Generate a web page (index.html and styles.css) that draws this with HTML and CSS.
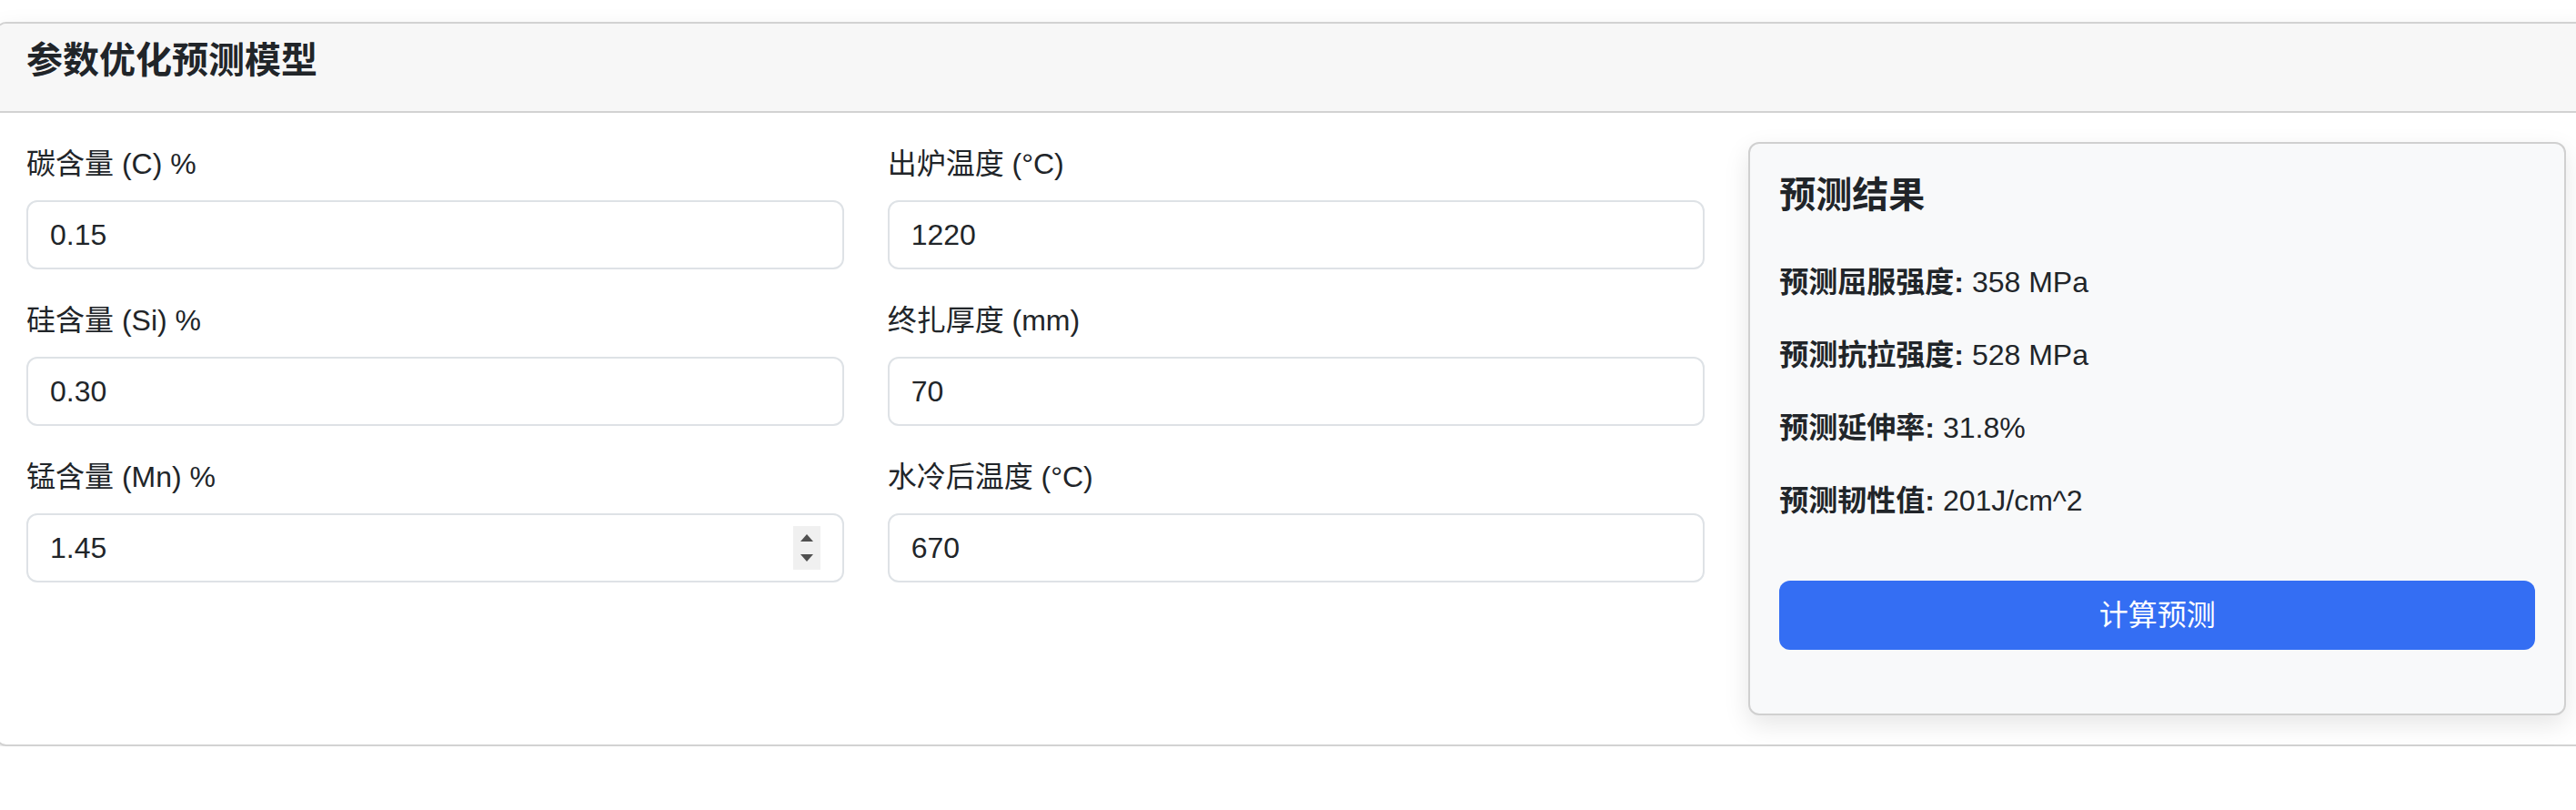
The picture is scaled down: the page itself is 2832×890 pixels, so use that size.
FILE: index.html
```html
<!DOCTYPE html>
<html lang="zh-CN">
<head>
<meta charset="utf-8">
<title>参数优化预测模型</title>
<link rel="stylesheet" href="styles.css">
</head>
<body>
<div class="card">
  <div class="card-header">
    <h5 class="card-title">参数优化预测模型</h5>
  </div>
  <div class="card-body">
    <div class="col">
      <div class="field">
        <label class="form-label">碳含量 (C) %</label>
        <div class="input">0.15</div>
      </div>
      <div class="field">
        <label class="form-label">硅含量 (Si) %</label>
        <div class="input">0.30</div>
      </div>
      <div class="field">
        <label class="form-label">锰含量 (Mn) %</label>
        <div class="input">1.45
          <span class="spin"><span class="tri up"></span><span class="tri down"></span></span>
        </div>
      </div>
    </div>
    <div class="col">
      <div class="field">
        <label class="form-label">出炉温度 (°C)</label>
        <div class="input">1220</div>
      </div>
      <div class="field">
        <label class="form-label">终扎厚度 (mm)</label>
        <div class="input">70</div>
      </div>
      <div class="field">
        <label class="form-label">水冷后温度 (°C)</label>
        <div class="input">670</div>
      </div>
    </div>
    <div class="result">
      <h5 class="result-title">预测结果</h5>
      <p><strong>预测屈服强度:</strong> 358 MPa</p>
      <p><strong>预测抗拉强度:</strong> 528 MPa</p>
      <p><strong>预测延伸率:</strong> 31.8%</p>
      <p><strong>预测韧性值:</strong> 201J/cm^2</p>
      <button class="btn">计算预测</button>
    </div>
  </div>
</div>
</body>
</html>
```

FILE: styles.css
```css
html, body {
  margin: 0;
  padding: 0;
  overflow: hidden;
  background: #ffffff;
}
body {
  padding-top: 24px;
  font-family: "Liberation Sans", "Noto Sans CJK SC", sans-serif;
  font-size: 32px;
  line-height: 48px;
  color: #212529;
}
.card {
  box-sizing: border-box;
  width: 2860px;
  margin-left: -5px;
  border: 2px solid #d2d2d2;
  border-radius: 12px;
  background: #fff;
  box-shadow: 0 16px 32px rgba(0, 0, 0, 0.15);
}
.card-header {
  background: #f7f7f7;
  border-bottom: 2px solid #d2d2d2;
  border-radius: 10px 10px 0 0;
  padding: 16px 32px;
}
.card-title {
  margin: 0 0 16px;
  font-size: 40px;
  line-height: 48px;
  font-weight: 600;
}
.card-body {
  padding: 32px;
  display: grid;
  grid-template-columns: repeat(3, 1fr);
  column-gap: 48px;
  align-items: start;
}
.col {
  display: flex;
  flex-direction: column;
}
.field {
  margin-bottom: 32px;
}
.form-label {
  display: block;
  margin-bottom: 16px;
}
.input {
  position: relative;
  box-sizing: border-box;
  height: 76px;
  padding: 12px 24px;
  border: 2px solid #dee2e6;
  border-radius: 12px;
  background: #fff;
}
.spin {
  position: absolute;
  right: 24px;
  top: 12px;
  width: 30px;
  height: 48px;
  background: #f0f0f0;
}
.tri {
  position: absolute;
  left: 8px;
  width: 0;
  height: 0;
  border-left: 7px solid transparent;
  border-right: 7px solid transparent;
}
.tri.up {
  top: 9px;
  border-bottom: 8px solid #505050;
}
.tri.down {
  bottom: 9px;
  border-top: 8px solid #505050;
}
.result {
  background: #f8f9fa;
  border: 2px solid #d0d0d0;
  border-radius: 12px;
  padding: 32px 32px 70px;
  box-shadow: 0 10px 28px rgba(0, 0, 0, 0.1);
  display: flex;
  flex-direction: column;
}
.result-title {
  margin: 0 0 48px;
  font-size: 40px;
  line-height: 48px;
  font-weight: 600;
}
.result p {
  margin: 0 0 32px;
}
.result strong {
  font-weight: 700;
}
.btn {
  margin-top: 32px;
  height: 76px;
  border: none;
  border-radius: 12px;
  background: #346ef3;
  color: #fff;
  font-family: "Liberation Sans", "Noto Sans CJK SC", sans-serif;
  font-size: 32px;
  line-height: 48px;
}
```
